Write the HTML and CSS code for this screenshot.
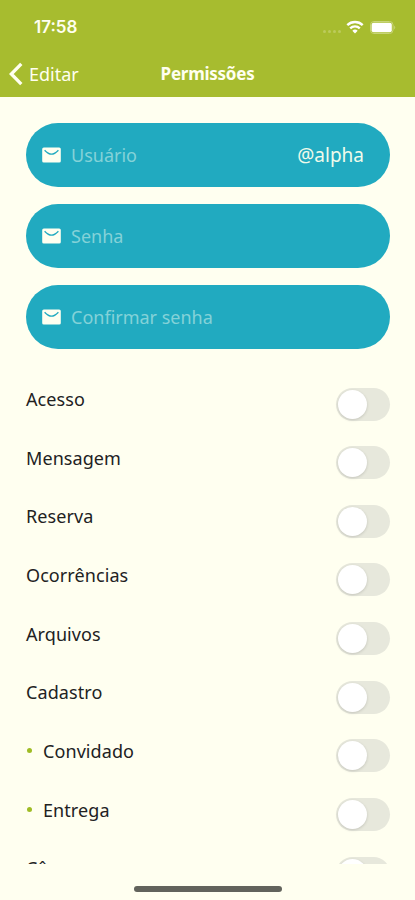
FILE: index.html
```html
<!DOCTYPE html>
<html lang="pt-BR">
<head>
<meta charset="utf-8">
<meta name="viewport" content="width=device-width, initial-scale=1">
<title>Permissões</title>
<link rel="stylesheet" href="styles.css">
</head>
<body>
<svg class="defs" aria-hidden="true">
  <symbol id="mail" viewBox="0 0 19 16">
    <rect x="0.2" y="0.4" width="18.6" height="15.2" rx="1.6" fill="#fffff0"/>
    <path d="M2.6 3.2 Q6.5 7.2 9.5 7.2 T16.4 3.2" fill="none" stroke="#21aac0" stroke-width="1.3"/>
  </symbol>
</svg>
<div class="screen">
  <header class="header">
    <div class="status">
      <span class="time">17:58</span>
      <div class="indicators">
        <span class="signal"><i></i><i></i><i></i><i></i></span>
        <svg class="wifi" viewBox="0 0 18 14">
          <path d="M1.3 5.1a11 11 0 0 1 15.4 0M4.2 8.3a6.9 6.9 0 0 1 9.6 0" fill="none" stroke="#fff" stroke-width="2.4"/>
          <path d="M9 13.5 6.3 10.7a4 4 0 0 1 5.4 0z" fill="#fff"/>
        </svg>
        <svg class="battery" viewBox="0 0 26 13">
          <rect x="0.5" y="0.5" width="22.5" height="12" rx="3.4" fill="none" stroke="#c7d477"/>
          <rect x="1.6" y="1.7" width="20.2" height="9.6" rx="2" fill="#fff"/>
          <path d="M24.2 4.5q2 2 0 4z" fill="#c7d477"/>
        </svg>
      </div>
    </div>
    <nav class="nav">
      <a class="back"><svg viewBox="0 0 14 24"><path d="M12.3 1.8 2.3 12l10 10.2" fill="none" stroke="#fffff0" stroke-width="3.3"/></svg><span>Editar</span></a>
      <h1>Permissões</h1>
    </nav>
  </header>
  <main class="content">
    <form class="fields">
      <div class="field"><svg><use href="#mail"/></svg><span class="hint">Usuário</span><span class="suffix">@alpha</span></div>
      <div class="field"><svg><use href="#mail"/></svg><span class="hint">Senha</span></div>
      <div class="field"><svg><use href="#mail"/></svg><span class="hint">Confirmar senha</span></div>
    </form>
    <ul class="permissions">
      <li><span>Acesso</span><b class="toggle"></b></li>
      <li><span>Mensagem</span><b class="toggle"></b></li>
      <li><span>Reserva</span><b class="toggle"></b></li>
      <li><span>Ocorrências</span><b class="toggle"></b></li>
      <li><span>Arquivos</span><b class="toggle"></b></li>
      <li><span>Cadastro</span><b class="toggle"></b></li>
      <li class="sub"><span>Convidado</span><b class="toggle"></b></li>
      <li class="sub"><span>Entrega</span><b class="toggle"></b></li>
      <li><span>Câmera</span><b class="toggle"></b></li>
    </ul>
  </main>
  <footer class="home"><span></span></footer>
</div>
</body>
</html>
```
FILE: styles.css
```css
* { box-sizing: border-box; }
body { margin: 0; background: #fffff0; font-family: "Noto Sans", sans-serif; }
.defs { display: none; }
.screen { height: 900px; display: flex; flex-direction: column; overflow: hidden; background: #fffff0; }
.header { height: 97px; flex: none; background: #a7bc2f; color: #fffff0; }
.status { height: 54px; padding: 0 19px 0 34px; display: flex; align-items: center; justify-content: space-between; }
.time { font: 600 17px/20px Inter, sans-serif; }
.indicators { display: flex; align-items: center; }
.signal { display: flex; gap: 2px; margin: 8px 5px 0 0; }
.signal i { width: 3px; height: 3px; border-radius: 50%; background: #bccb5c; }
.wifi { width: 18px; height: 14px; margin-right: 6px; }
.battery { width: 26px; height: 13px; }
.nav { height: 40px; display: grid; grid-template-columns: 1fr auto 1fr; align-items: center; padding: 0 9px; }
.back { display: flex; align-items: center; gap: 6px; font-size: 18px; line-height: 24px; }
.back svg { width: 14px; height: 24px; }
.nav h1 { margin: 0; font-size: 17px; line-height: 24px; font-weight: 700; letter-spacing: -0.25px; }
.content { height: 767px; flex: none; overflow: hidden; padding: 26px 25px 0 26px; }
.fields { display: grid; gap: 17px; }
.field { height: 64px; border-radius: 32px; background: #21aac0; display: flex; align-items: center; padding: 0 26px 0 16px; }
.field svg { width: 19px; height: 16px; margin-right: 10px; flex: none; }
.hint { color: #84d2d8; font-size: 18px; line-height: 24px; }
.suffix { margin-left: auto; color: #f0fbeb; font-size: 19px; line-height: 24px; }
.permissions { list-style: none; margin: 33px 0 0; padding: 0; }
.permissions li { height: 58.67px; display: flex; justify-content: space-between; align-items: flex-start; padding-top: 5px; font-size: 18px; line-height: 24px; letter-spacing: 0.08px; color: #22221f; }
.permissions li > span { display: flex; align-items: center; }
.sub > span::before { content: ""; width: 5px; height: 5px; margin: 0 11px 0 1px; border-radius: 50%; background: #9fbc24; }
.toggle { width: 54px; height: 33px; margin-top: 0.5px; border-radius: 17px; padding: 2px; background: #e7e8dc; }
.toggle::before { content: ""; display: block; width: 29px; height: 29px; border-radius: 50%; background: #fff; box-shadow: 0 1px 3px rgba(60, 60, 60, .2); }
.home { flex: 1; display: flex; justify-content: center; padding-top: 22px; }
.home span { width: 148px; height: 6px; border-radius: 3px; background: #62635c; }
```
